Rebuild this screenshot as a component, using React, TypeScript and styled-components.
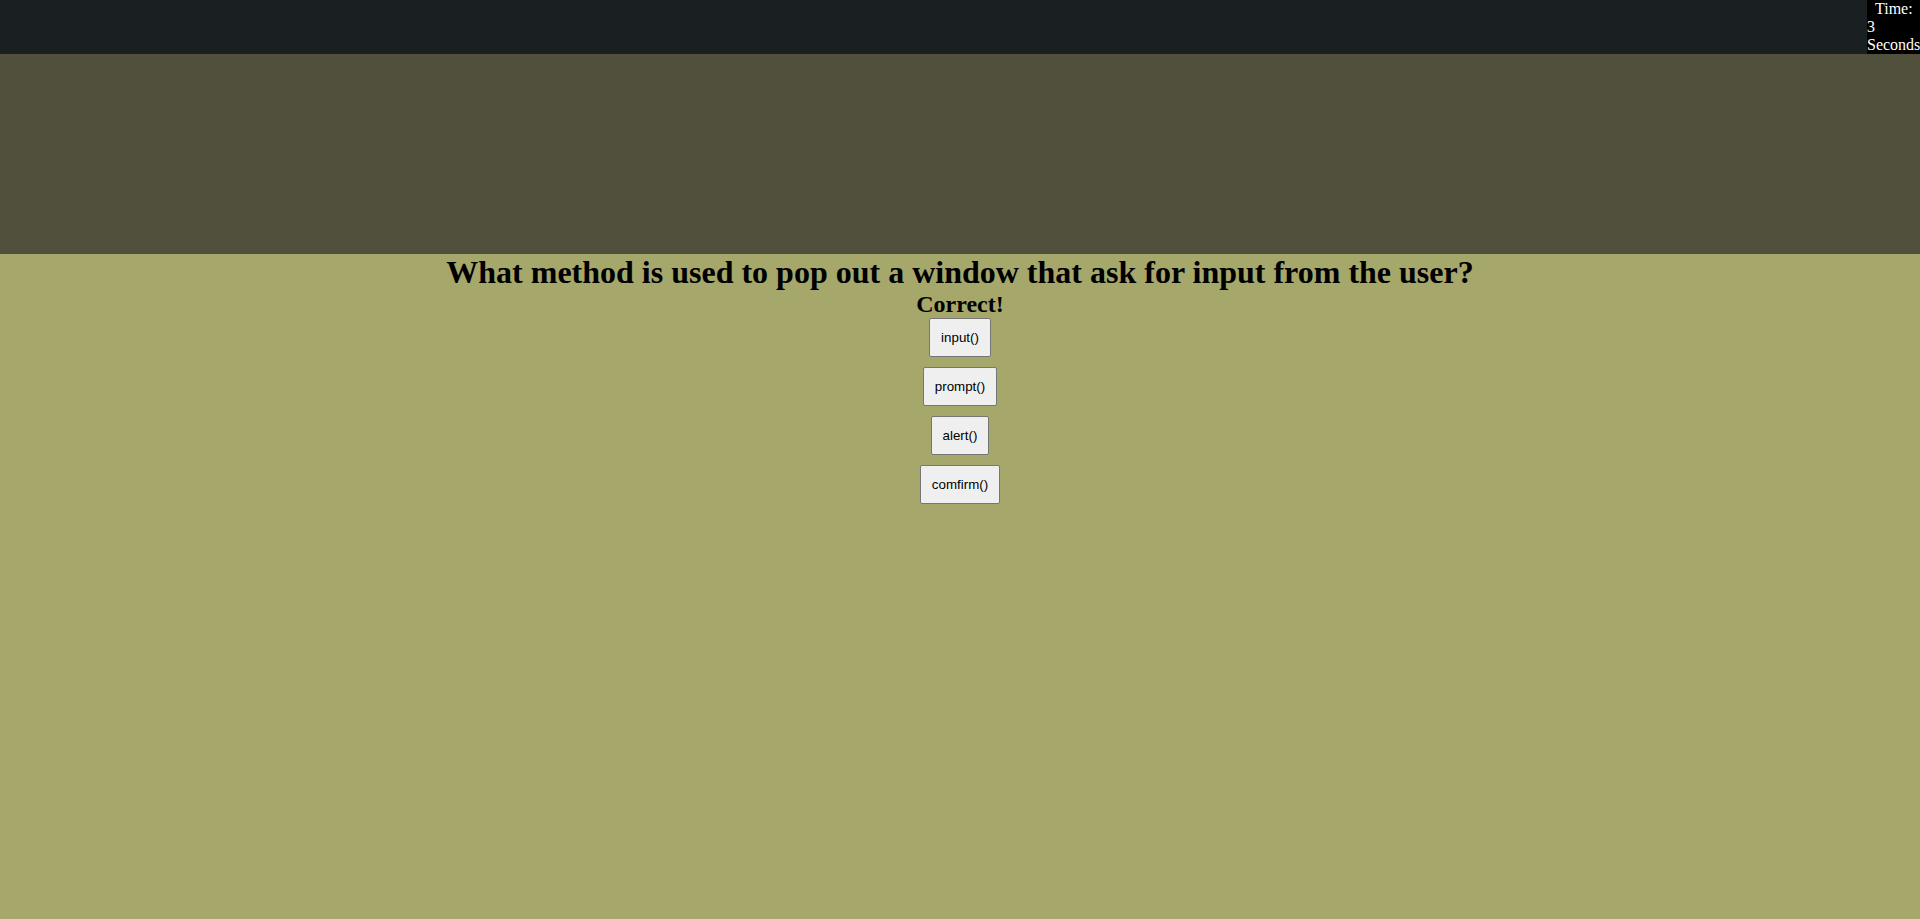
import React from "react";
import styled, { createGlobalStyle } from "styled-components";

const GlobalStyle = createGlobalStyle`
  html, body {
    margin: 0;
    padding: 0;
    background: #a6a76a;
    font-family: "Liberation Serif", "Times New Roman", serif;
  }
`;

const choices = ["input()", "prompt()", "alert()", "comfirm()"];

const App = () => {
  return (
    <>
      <GlobalStyle />
      <Page>
        <TopBar>
          <Timer>
            <TimeLabel>Time:</TimeLabel> 3 Seconds
          </Timer>
        </TopBar>
        <Banner />
        <Quiz>
          <Question>
            What method is used to pop out a window that ask for input from the
            user?
          </Question>
          <Result>Correct!</Result>
          <Choices>
            {choices.map((c) => (
              <Choice key={c}>{c}</Choice>
            ))}
          </Choices>
        </Quiz>
      </Page>
    </>
  );
};

export default App;

const Page = styled.div`
  min-height: 919px;
  background: #a6a76a;
`;

const TopBar = styled.header`
  display: flex;
  justify-content: flex-end;
  background: #1a1f21;
`;

const Timer = styled.div`
  width: 53px;
  background: #000;
  color: #fff;
  font-size: 16px;
  line-height: 18px;
`;

const TimeLabel = styled.span`
  padding-left: 8px;
`;

const Banner = styled.div`
  height: 200px;
  background: #50503d;
`;

const Quiz = styled.main`
  display: flex;
  flex-direction: column;
  align-items: center;
  text-align: center;
`;

const Question = styled.h1`
  margin: 0;
  font-size: 32px;
  line-height: 37px;
  font-weight: bold;
  color: #000;
`;

const Result = styled.h2`
  margin: 0;
  font-size: 24px;
  line-height: 27px;
  font-weight: bold;
  color: #000;
`;

const Choices = styled.div`
  display: flex;
  flex-direction: column;
  align-items: center;
  gap: 10px;
`;

const Choice = styled.button`
  font-family: "Liberation Sans", Arial, sans-serif;
  font-size: 13.33px;
  line-height: 15px;
  height: 39px;
  padding: 0 11px;
  color: #000;
  background: #efefef;
  border: 1px solid #767676;
  border-radius: 2px;
`;
